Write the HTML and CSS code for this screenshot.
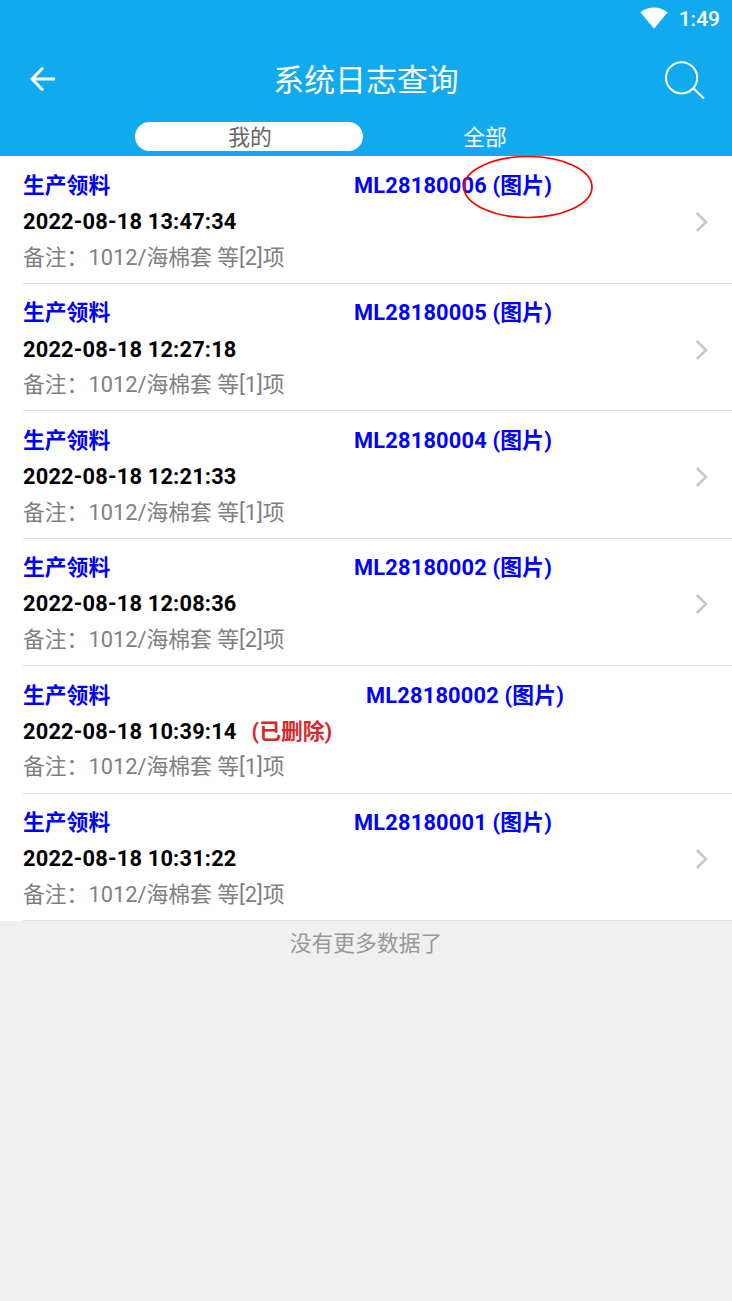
FILE: index.html
```html
<!DOCTYPE html>
<html lang="zh-CN">
<head>
<meta charset="utf-8">
<title>系统日志查询</title>
<link rel="stylesheet" href="styles.css">
</head>
<body>
<header class="header">
  <div class="status">
    <svg class="wifi" viewBox="0 0 28 22"><path d="M0.4 5.3Q6.5 0.5 14 0.5T27.6 5.3L14 21.8Z" fill="#fff"/></svg>
    <span class="clock">1:49</span>
  </div>
  <div class="titlebar">
    <svg class="back" viewBox="0 0 26 26"><path d="M25 13H2.5M13 1.8L2 13L13 24.2" fill="none" stroke="#fff" stroke-width="3"/></svg>
    <h1 class="title">系统日志查询</h1>
    <svg class="search" viewBox="0 0 42 42"><circle cx="17.6" cy="17.8" r="15.6" fill="none" stroke="#fff" stroke-width="2"/><path d="M29 28L40 38.5" fill="none" stroke="#fff" stroke-width="2.2"/></svg>
  </div>
  <nav class="tabs">
    <span class="tab active">我的</span>
    <span class="tab">全部</span>
  </nav>
</header>
<main class="list">
  <article class="row">
    <div class="type">生产领料</div><div class="code">ML28180006 (图片)<svg class="mark" viewBox="0 0 132 64"><ellipse cx="66" cy="32" rx="64" ry="30.5" fill="none" stroke="#f00" stroke-width="1.7"/></svg></div>
    <div class="time">2022-08-18 13:47:34</div>
    <div class="note">备注：1012/海棉套 等[2]项</div>
    <svg class="chevron" viewBox="0 0 14 20"><path d="M1.8 1L11 10L1.8 19" fill="none" stroke="#c8c8c8" stroke-width="2.6"/></svg>
  </article>
  <article class="row">
    <div class="type">生产领料</div><div class="code">ML28180005 (图片)</div>
    <div class="time">2022-08-18 12:27:18</div>
    <div class="note">备注：1012/海棉套 等[1]项</div>
    <svg class="chevron" viewBox="0 0 14 20"><path d="M1.8 1L11 10L1.8 19" fill="none" stroke="#c8c8c8" stroke-width="2.6"/></svg>
  </article>
  <article class="row">
    <div class="type">生产领料</div><div class="code">ML28180004 (图片)</div>
    <div class="time">2022-08-18 12:21:33</div>
    <div class="note">备注：1012/海棉套 等[1]项</div>
    <svg class="chevron" viewBox="0 0 14 20"><path d="M1.8 1L11 10L1.8 19" fill="none" stroke="#c8c8c8" stroke-width="2.6"/></svg>
  </article>
  <article class="row">
    <div class="type">生产领料</div><div class="code">ML28180002 (图片)</div>
    <div class="time">2022-08-18 12:08:36</div>
    <div class="note">备注：1012/海棉套 等[2]项</div>
    <svg class="chevron" viewBox="0 0 14 20"><path d="M1.8 1L11 10L1.8 19" fill="none" stroke="#c8c8c8" stroke-width="2.6"/></svg>
  </article>
  <article class="row deleted">
    <div class="type">生产领料</div><div class="code">ML28180002 (图片)</div>
    <div class="time">2022-08-18 10:39:14<span class="flag">(已删除)</span></div>
    <div class="note">备注：1012/海棉套 等[1]项</div>
  </article>
  <article class="row">
    <div class="type">生产领料</div><div class="code">ML28180001 (图片)</div>
    <div class="time">2022-08-18 10:31:22</div>
    <div class="note">备注：1012/海棉套 等[2]项</div>
    <svg class="chevron" viewBox="0 0 14 20"><path d="M1.8 1L11 10L1.8 19" fill="none" stroke="#c8c8c8" stroke-width="2.6"/></svg>
  </article>
</main>
<footer class="end">没有更多数据了</footer>
</body>
</html>
```

FILE: styles.css
```css
* { box-sizing: border-box; }
body {
  margin: 0;
  min-height: 1301px;
  background: #f0f0f0;
  font-family: Roboto, "Noto Sans CJK SC", sans-serif;
  font-size: 21.8px;
}
svg { display: block; }
.header {
  height: 156px;
  background: #11aaee;
  color: #fff;
}
.status {
  height: 38px;
  padding-right: 12px;
  display: flex;
  justify-content: flex-end;
  align-items: center;
  gap: 11px;
}
.wifi { width: 28px; height: 22px; margin-top: -2px; }
.clock { font-weight: 500; font-size: 21px; }
.titlebar {
  height: 84px;
  padding: 0 26px 0 30px;
  display: grid;
  grid-template-columns: 42px 1fr 42px;
  align-items: center;
}
.back { width: 26px; height: 26px; margin-top: -2px; }
.title {
  margin: 0;
  padding: 2px 4px 0 0;
  text-align: center;
  font-size: 30.9px;
  font-weight: 400;
  line-height: 44px;
}
.search { width: 42px; height: 42px; margin-top: 1px; }
.tabs {
  display: grid;
  grid-template-columns: 228px 228px;
  gap: 7px;
  padding-left: 135px;
}
.tab {
  height: 29px;
  padding-left: 2px;
  line-height: 31px;
  text-align: center;
}
.tab.active { background: #fff; color: #666; border-radius: 15px; }
.list { background: #fff; padding-top: 0.5px; }
.row {
  height: 127.45px;
  margin-left: 23px;
  padding-top: 11.4px;
  border-bottom: 1px solid #e2e2e2;
  display: grid;
  grid-template-columns: 331px 1fr 37px;
  grid-template-rows: 36px 36.5px 34.5px;
  align-items: center;
  white-space: nowrap;
  line-height: 34px;
}
.row.deleted { grid-template-columns: 343px 1fr 25px; }
.type, .code { color: #00f; font-weight: 700; }
.code { position: relative; letter-spacing: 0.2px; }
.mark {
  position: absolute;
  left: 108px;
  top: -14px;
  width: 132px;
  height: 64px;
}
.time {
  grid-column: 1;
  grid-row: 2;
  color: #000;
  font-weight: 700;
  letter-spacing: 0.19px;
}
.flag { color: #d32a2a; margin-left: 15px; letter-spacing: 0; }
.note { grid-column: 1; grid-row: 3; color: #808080; }
.chevron { grid-column: 3; grid-row: 2; width: 14px; height: 20px; }
.end {
  text-align: center;
  color: #999;
  line-height: 32px;
  padding-top: 6.5px;
}
```
